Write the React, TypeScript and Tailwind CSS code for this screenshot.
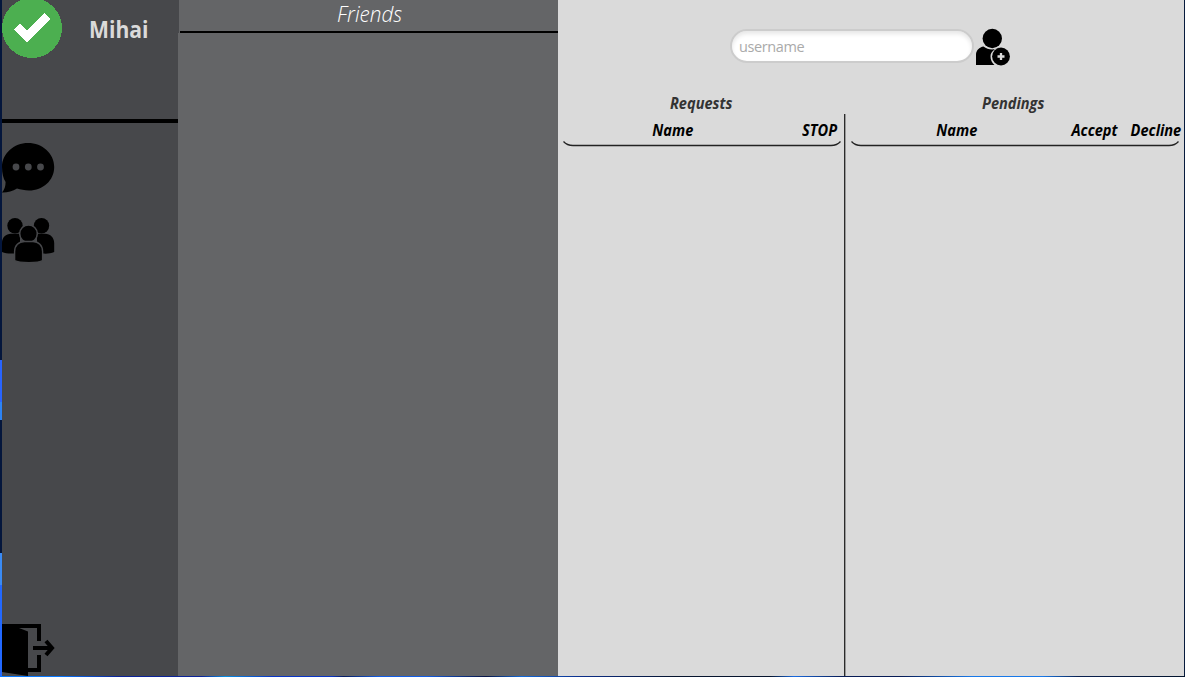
import React from 'react';

function CheckBadge() {
  return (
    <svg className="block h-[60px] w-[60px] shrink-0" viewBox="2 -2 60 60" shapeRendering="crispEdges">
      <circle cx="32" cy="28" r="30" fill="#4caf50" />
      <path d="M14 29.5l6-6 7 6.5 17-17 6 6-23 23z" fill="#fff" />
    </svg>
  );
}

function ChatIcon() {
  return (
    <svg className="block h-[54px] w-[53px]" viewBox="2 141 53 54">
      <path d="M28 143C42.5 143 54.2 153.500 54.200 167S43 190.500 29 190.500C24.500 190.500 20.500 189.600 17 188.600C12.500 191.500 7 192.800 2 192.600C4.500 189.500 5.600 186 5.600 182C3.200 178.500 2 173 2 167C2 153.500 14 143 28 143Z" />
      <g fill="#47484b">
        <circle cx="16" cy="167" r="3.400" />
        <circle cx="28.300" cy="167" r="3.400" />
        <circle cx="40.500" cy="167" r="3.400" />
      </g>
    </svg>
  );
}

function GroupIcon() {
  return (
    <svg className="block h-[48px] w-[53px]" viewBox="2 216 53 48">
      <circle cx="15" cy="225.700" r="7.700" />
      <circle cx="41.500" cy="225.700" r="7.700" />
      <path d="M2 252V243C2 237.500 6 233.800 11 233.800H45C50.500 233.800 54.200 238 54.200 243V252C50.500 253.800 46 253.800 42 253.500H14C9.500 253.800 5.500 253.500 2 252Z" />
      <path d="M20 234H37V242H20Z" fill="#47484b" />
      <circle cx="28.500" cy="233.800" r="8.800" stroke="#47484b" strokeWidth="1.500" />
      <path d="M14.600 260.500V251.500C14.600 245.500 18.700 241.500 24.500 241.500H33C38.500 241.500 42.600 245.500 42.600 251.500V260.500C39 263.300 19 263.300 14.600 260.500Z" stroke="#47484b" strokeWidth="1.400" />
    </svg>
  );
}

function ExitIcon() {
  return (
    <svg className="block h-[53px] w-[53px]" viewBox="2 623 53 53">
      <path d="M2 624H41V641H37V628H19L28 631.500V676L2 672Z" />
      <path d="M41 655V672H28V668H37V655Z" />
      <path d="M33 648H50M46 641L52 648L46 655" fill="none" stroke="#000" strokeWidth="4" />
    </svg>
  );
}

function AddFriendIcon() {
  return (
    <svg className="block h-[38px] w-[35px]" viewBox="975 28 35 38">
      <circle cx="992.300" cy="38.500" r="9.700" />
      <path d="M976 65V54.500C976 50.500 979.500 47 983.500 46.500C988 50 994 50.500 999.500 47.500C994.500 48.500 990.500 52 990.500 56.500C990.500 60 992 63 994.500 65Z" />
      <circle cx="1001" cy="56.500" r="8.900" />
      <path d="M1001 53V60M997.500 56.500H1004.500" stroke="#dadada" strokeWidth="2.300" />
    </svg>
  );
}

function Underline({ width }: { width: number }) {
  return (
    <svg className="block h-[6px]" style={{ width }} viewBox={`0 0 ${width} 6`}>
      <path d={`M.5 .5Q4 4.500 10 4.500H${width - 10}Q${width - 4} 4.500 ${width - 0.5} .5`} fill="none" stroke="#222" strokeWidth="1.300" />
    </svg>
  );
}

function Label({ text, width, className = 'text-black' }: { text: string; width: number; className?: string }) {
  return (
    <div className="flex h-5 shrink-0 justify-center whitespace-nowrap" style={{ width }}>
      <span className={`origin-center scale-x-[.94] text-[15.5px] leading-5 font-bold italic ${className}`}>{text}</span>
    </div>
  );
}

export default function App() {
  return (
    <div className="flex h-[677px] w-[1185px] flex-col overflow-hidden bg-[#081838] font-['Open_Sans','Noto_Sans',sans-serif]">
      <div className="flex h-[676px]">
        <div className="flex w-[2px] shrink-0 flex-col bg-[#04163c]">
          <div className="mt-[360px] h-[42px] bg-[#2864ff]" />
          <div className="h-[18px] bg-[#2c83f5]" />
          <div className="mt-[133px] h-[32px] bg-[#3a8bf5]" />
          <div className="grow bg-[#2268ff]" />
        </div>

        <aside className="flex w-[176px] shrink-0 flex-col bg-[#47484b]">
          <header className="flex h-[123px] shrink-0 border-b-4 border-black">
            <div className="-mt-[2px]"><CheckBadge /></div>
            <h1 className="mt-[14px] ml-[27px] origin-left scale-x-[.94] text-[22.5px] leading-8 font-bold text-[#dadada]">Mihai</h1>
          </header>
          <nav className="flex grow flex-col">
            <button aria-label="Messages" className="mt-[18px] w-[53px]"><ChatIcon /></button>
            <button aria-label="Friends" className="mt-[21px] w-[53px]"><GroupIcon /></button>
            <button aria-label="Log out" className="mt-auto w-[53px]"><ExitIcon /></button>
          </nav>
        </aside>

        <section className="w-[380px] shrink-0 bg-[#646567]">
          <header className="flex h-[33px] border-l border-[#47484b]">
            <div className="ml-px flex grow justify-center border-b-2 border-black pl-px">
              <h2 className="origin-center scale-x-[.94] text-[22px] leading-[26px] font-light text-white italic">Friends</h2>
            </div>
          </header>
        </section>

        <main className="flex w-[626px] shrink-0 flex-col bg-[#dadada]">
          <div className="flex h-[94px] shrink-0 pt-[28px] pl-[172px]">
            <input
              aria-label="Username"
              placeholder="username"
              className="mt-px h-[34px] w-[244px] rounded-full border-2 border-[#cccccc] bg-white px-[7px] text-[14.5px] tracking-[-.4px] shadow-[inset_0_3px_4px_#e7e7e7] outline-none placeholder:text-[#aaaaaa]"
            />
            <button aria-label="Add friend" className="ml-px h-[38px]"><AddFriendIcon /></button>
          </div>
          <div className="flex h-[20px] shrink-0">
            <div className="-mt-px pl-[112px]"><Label text="Requests" width={62} className="text-[#333]" /></div>
            <div className="-mt-px ml-[249px]"><Label text="Pendings" width={64} className="text-[#333]" /></div>
          </div>
          <div className="flex grow">
            <section className="w-[287px] border-r border-[#2b2b2b] pl-[5px]">
              <div className="flex h-[27px] pt-[6px] pl-[89px]">
                <Label text="Name" width={42} />
                <div className="ml-[107px]"><Label text="STOP" width={38} /></div>
              </div>
              <Underline width={278} />
            </section>
            <section className="w-[339px] border-l border-[#999] pl-[5px]">
              <div className="flex h-[27px] pt-[6px] pl-[85px]">
                <Label text="Name" width={42} />
                <div className="ml-[93px]"><Label text="Accept" width={47} /></div>
                <div className="ml-[12px]"><Label text="Decline" width={52} /></div>
              </div>
              <Underline width={328} />
            </section>
          </div>
        </main>
        <div className="w-px bg-[#071b3d]" />
      </div>
      <div className="h-px bg-[linear-gradient(90deg,#0878ff_0_5%,#0b239a_10%_17%,#088ee4_19%,#0834c8_23%_28%,#071c60_29%,#125de7_32%_36%,#081445_41%,#126adc_44%,#0b2e8b_49%,#06142d_57%_65%,#196be2_67%,#071b55_71%_76%,#1878e8_82%_88%,#092050_91%,#03142d_100%)]" />
    </div>
  );
}
